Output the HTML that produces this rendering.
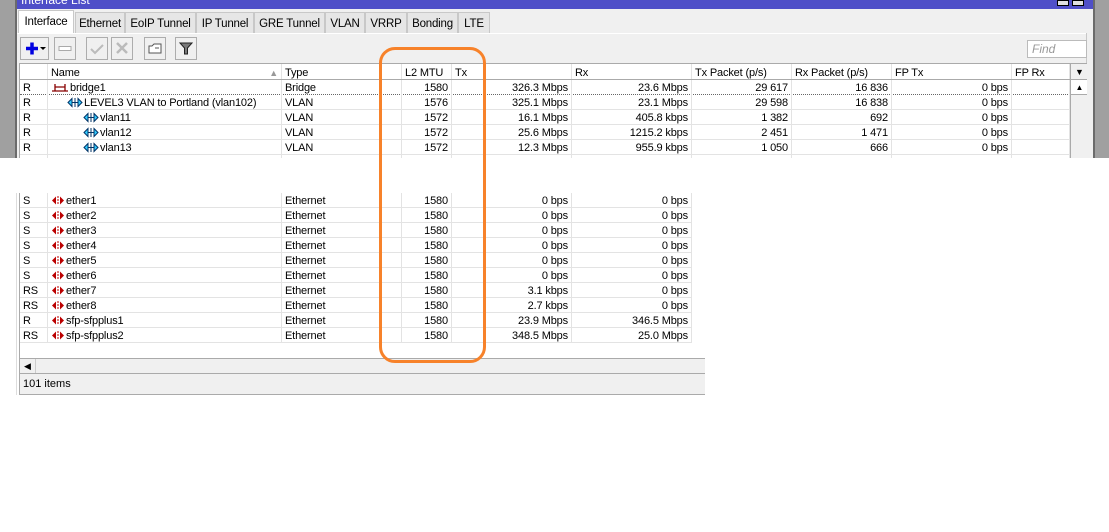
<!DOCTYPE html>
<html><head><meta charset="utf-8"><style>
*{margin:0;padding:0;box-sizing:border-box}
body{width:1109px;height:532px;background:#fff;position:relative;overflow:hidden;font-family:"Liberation Sans",Arial,sans-serif;font-size:11px;color:#000}
.abs{position:absolute}
.row{position:absolute;left:0;height:15px;display:flex;border-bottom:1px solid #e3e3e3;white-space:nowrap;letter-spacing:-0.15px}
.row>div{height:15px;line-height:16px;border-right:1px solid #e3e3e3;padding:0 3px;overflow:hidden}
.w0{width:28px}.w1{width:234px}.w2{width:120px}.w3{width:50px;text-align:right}.w4{width:120px;text-align:right}.w5{width:120px;text-align:right}.w6{width:100px;text-align:right}.w7{width:100px;text-align:right}.w8{width:120px;text-align:right}.w9{width:58px}
.hdr>div{background:#fff;line-height:18px;text-align:left}
.tab{position:absolute;top:12px;height:22px;background:#e6e6e6;border:1px solid #c8c8c8;border-bottom:none;line-height:22px;text-align:center;font-size:11.5px;letter-spacing:-0.2px}
.btn{position:absolute;top:37px;height:23px;border:1px solid #adadad;background:#f0f0f0}
.ic{display:inline-block;vertical-align:-2px;margin-right:1px}
</style></head><body>
<div class="abs" style="left:0;top:0;width:15px;height:158px;background:#a0a0a0"></div>
<div class="abs" style="left:15px;top:0;width:2px;height:158px;background:#6b6b6b"></div>
<div class="abs" style="left:1093px;top:0;width:2px;height:158px;background:#6b6b6b"></div>
<div class="abs" style="left:1095px;top:0;width:14px;height:158px;background:#a0a0a0"></div>
<div class="abs" style="left:17px;top:0;width:1076px;height:158px;background:#f0f0f0"></div>
<div class="abs" style="left:17px;top:0;width:1076px;height:9px;background:#4f4fc8;overflow:hidden"><span style="position:absolute;left:4px;top:-7px;color:#fff;font-size:12px">Interface List</span>
<div class="abs" style="left:1040px;top:0;width:12px;height:6px;border:1px solid #000;background:#e0e0e0"></div><div class="abs" style="left:1055px;top:0;width:12px;height:6px;border:1px solid #000;background:#e0e0e0"></div></div>
<div class="tab" style="left:18px;width:56px;top:10px;height:24px;background:#fff;line-height:22px">Interface</div>
<div class="tab" style="left:75px;width:50px">Ethernet</div>
<div class="tab" style="left:125px;width:71px">EoIP Tunnel</div>
<div class="tab" style="left:196px;width:58px">IP Tunnel</div>
<div class="tab" style="left:254px;width:71px">GRE Tunnel</div>
<div class="tab" style="left:325px;width:40px">VLAN</div>
<div class="tab" style="left:365px;width:42px">VRRP</div>
<div class="tab" style="left:407px;width:51px">Bonding</div>
<div class="tab" style="left:458px;width:32px">LTE</div>
<div class="abs" style="left:17px;top:33px;width:1070px;height:1px;background:#fff"></div>
<div class="abs" style="left:1086px;top:33px;width:1px;height:125px;background:#c8c8c8"></div>
<div class="btn" style="left:20px;width:29px"><svg width="27" height="21"><path d="M5 10.5h12M11 4.5v12" stroke="#0000e0" stroke-width="3.5"/><path d="M19 9h6l-3 3z" fill="#000"/></svg></div>
<div class="btn" style="left:54px;width:22px"><svg width="20" height="21"><rect x="4" y="8.5" width="12" height="4" fill="#fff" stroke="#aaa"/></svg></div>
<div class="btn" style="left:86px;width:22px"><svg width="20" height="21"><path d="M4 11l4 4 8-8" stroke="#bbb" stroke-width="2" fill="none"/></svg></div>
<div class="btn" style="left:111px;width:22px"><svg width="20" height="21"><path d="M5 5l10 10M15 5L5 15" stroke="#bbb" stroke-width="2.5"/></svg></div>
<div class="btn" style="left:144px;width:22px"><svg width="20" height="21"><path d="M4 8h3l2-2h7v9H4z" fill="#fff" stroke="#555"/><path d="M10 10h4" stroke="#555"/></svg></div>
<div class="btn" style="left:175px;width:22px"><svg width="20" height="21"><path d="M4 5h12l-4.5 5v6h-3v-6z" fill="#7a7a7a" stroke="#222"/></svg></div>
<div class="abs" style="left:1027px;top:40px;width:60px;height:18px;background:#fff;border:1px solid #bbb;color:#999;font-style:italic;font-size:12px;line-height:16px;padding-left:4px">Find</div>
<div class="abs" style="left:19px;top:63px;width:1068px;height:95px;overflow:hidden;background:#fff;border-top:1px solid #aaa;border-left:1px solid #aaa">
 <div class="row hdr" style="top:0;height:16px;border-bottom:1px solid #aaa"><div class="w0"></div><div class="w1">Name<span style="float:right;color:#999;font-size:9px">▲</span></div><div class="w2">Type</div><div class="w3" style="text-align:left">L2 MTU</div><div class="w4">Tx</div><div class="w5">Rx</div><div class="w6">Tx Packet (p/s)</div><div class="w7">Rx Packet (p/s)</div><div class="w8">FP Tx</div><div class="w9">FP Rx</div></div>
 <div class="row" style="top:16px;border-bottom:1px dotted #666"><div class="w0">R</div><div class="w1"><svg class="ic" width="18" height="11"><path d="M1 9h16M4 2v7M14 2v7M4 5h10" stroke="#800" stroke-width="1.3" fill="none"/></svg>bridge1</div><div class="w2">Bridge</div><div class="w3">1580</div><div class="w4">326.3 Mbps</div><div class="w5">23.6 Mbps</div><div class="w6">29 617</div><div class="w7">16 836</div><div class="w8">0 bps</div><div class="w9"></div></div>
 <div class="row" style="top:31px"><div class="w0">R</div><div class="w1" style="padding-left:19px"><svg class="ic" width="16" height="11"><path d="M1 5.5l4-4v8zM15 5.5l-4-4v8zM5 5.5h6M8 1v9" stroke="#036" fill="#3cf"/></svg>LEVEL3 VLAN to Portland (vlan102)</div><div class="w2">VLAN</div><div class="w3">1576</div><div class="w4">325.1 Mbps</div><div class="w5">23.1 Mbps</div><div class="w6">29 598</div><div class="w7">16 838</div><div class="w8">0 bps</div><div class="w9"></div></div>
 <div class="row" style="top:46px"><div class="w0">R</div><div class="w1" style="padding-left:35px"><svg class="ic" width="16" height="11"><path d="M1 5.5l4-4v8zM15 5.5l-4-4v8zM5 5.5h6M8 1v9" stroke="#036" fill="#3cf"/></svg>vlan11</div><div class="w2">VLAN</div><div class="w3">1572</div><div class="w4">16.1 Mbps</div><div class="w5">405.8 kbps</div><div class="w6">1 382</div><div class="w7">692</div><div class="w8">0 bps</div><div class="w9"></div></div>
 <div class="row" style="top:61px"><div class="w0">R</div><div class="w1" style="padding-left:35px"><svg class="ic" width="16" height="11"><path d="M1 5.5l4-4v8zM15 5.5l-4-4v8zM5 5.5h6M8 1v9" stroke="#036" fill="#3cf"/></svg>vlan12</div><div class="w2">VLAN</div><div class="w3">1572</div><div class="w4">25.6 Mbps</div><div class="w5">1215.2 kbps</div><div class="w6">2 451</div><div class="w7">1 471</div><div class="w8">0 bps</div><div class="w9"></div></div>
 <div class="row" style="top:76px"><div class="w0">R</div><div class="w1" style="padding-left:35px"><svg class="ic" width="16" height="11"><path d="M1 5.5l4-4v8zM15 5.5l-4-4v8zM5 5.5h6M8 1v9" stroke="#036" fill="#3cf"/></svg>vlan13</div><div class="w2">VLAN</div><div class="w3">1572</div><div class="w4">12.3 Mbps</div><div class="w5">955.9 kbps</div><div class="w6">1 050</div><div class="w7">666</div><div class="w8">0 bps</div><div class="w9"></div></div>
 <div class="row" style="top:91px"><div class="w0">R</div><div class="w1" style="padding-left:35px">vlan14</div><div class="w2">VLAN</div><div class="w3">1572</div><div class="w4">27.1 Mbps</div><div class="w5">3.1 Mbps</div><div class="w6">2 300</div><div class="w7">1 500</div><div class="w8">0 bps</div><div class="w9"></div></div>
 <div class="abs" style="left:1050px;top:0;width:18px;height:95px;background:#f0f0f0;border-left:1px solid #aaa"><div style="height:16px;border-bottom:1px solid #aaa;text-align:center;font-size:9px;line-height:16px">▼</div><div style="height:15px;border-bottom:1px solid #aaa;background:#fff;text-align:center;font-size:8px;line-height:15px">▲</div></div>
</div>
<div class="abs" style="left:16px;top:193px;width:1px;height:202px;background:#ddd"></div>
<div class="abs" style="left:19px;top:193px;width:686px;height:202px;overflow:hidden;background:#fff;border-left:1px solid #aaa">
 <div class="row" style="top:0"><div class="w0">S</div><div class="w1"><svg class="ic" width="14" height="11"><path d="M1 5.5l4-4v8zM13 5.5l-4-4v8z" fill="#b00"/><path d="M7 1v9" stroke="#b00" stroke-dasharray="2 1"/></svg>ether1</div><div class="w2">Ethernet</div><div class="w3">1580</div><div class="w4">0 bps</div><div class="w5">0 bps</div></div>
 <div class="row" style="top:15px"><div class="w0">S</div><div class="w1"><svg class="ic" width="14" height="11"><path d="M1 5.5l4-4v8zM13 5.5l-4-4v8z" fill="#b00"/><path d="M7 1v9" stroke="#b00" stroke-dasharray="2 1"/></svg>ether2</div><div class="w2">Ethernet</div><div class="w3">1580</div><div class="w4">0 bps</div><div class="w5">0 bps</div></div>
 <div class="row" style="top:30px"><div class="w0">S</div><div class="w1"><svg class="ic" width="14" height="11"><path d="M1 5.5l4-4v8zM13 5.5l-4-4v8z" fill="#b00"/><path d="M7 1v9" stroke="#b00" stroke-dasharray="2 1"/></svg>ether3</div><div class="w2">Ethernet</div><div class="w3">1580</div><div class="w4">0 bps</div><div class="w5">0 bps</div></div>
 <div class="row" style="top:45px"><div class="w0">S</div><div class="w1"><svg class="ic" width="14" height="11"><path d="M1 5.5l4-4v8zM13 5.5l-4-4v8z" fill="#b00"/><path d="M7 1v9" stroke="#b00" stroke-dasharray="2 1"/></svg>ether4</div><div class="w2">Ethernet</div><div class="w3">1580</div><div class="w4">0 bps</div><div class="w5">0 bps</div></div>
 <div class="row" style="top:60px"><div class="w0">S</div><div class="w1"><svg class="ic" width="14" height="11"><path d="M1 5.5l4-4v8zM13 5.5l-4-4v8z" fill="#b00"/><path d="M7 1v9" stroke="#b00" stroke-dasharray="2 1"/></svg>ether5</div><div class="w2">Ethernet</div><div class="w3">1580</div><div class="w4">0 bps</div><div class="w5">0 bps</div></div>
 <div class="row" style="top:75px"><div class="w0">S</div><div class="w1"><svg class="ic" width="14" height="11"><path d="M1 5.5l4-4v8zM13 5.5l-4-4v8z" fill="#b00"/><path d="M7 1v9" stroke="#b00" stroke-dasharray="2 1"/></svg>ether6</div><div class="w2">Ethernet</div><div class="w3">1580</div><div class="w4">0 bps</div><div class="w5">0 bps</div></div>
 <div class="row" style="top:90px"><div class="w0">RS</div><div class="w1"><svg class="ic" width="14" height="11"><path d="M1 5.5l4-4v8zM13 5.5l-4-4v8z" fill="#b00"/><path d="M7 1v9" stroke="#b00" stroke-dasharray="2 1"/></svg>ether7</div><div class="w2">Ethernet</div><div class="w3">1580</div><div class="w4">3.1 kbps</div><div class="w5">0 bps</div></div>
 <div class="row" style="top:105px"><div class="w0">RS</div><div class="w1"><svg class="ic" width="14" height="11"><path d="M1 5.5l4-4v8zM13 5.5l-4-4v8z" fill="#b00"/><path d="M7 1v9" stroke="#b00" stroke-dasharray="2 1"/></svg>ether8</div><div class="w2">Ethernet</div><div class="w3">1580</div><div class="w4">2.7 kbps</div><div class="w5">0 bps</div></div>
 <div class="row" style="top:120px"><div class="w0">R</div><div class="w1"><svg class="ic" width="14" height="11"><path d="M1 5.5l4-4v8zM13 5.5l-4-4v8z" fill="#b00"/><path d="M7 1v9" stroke="#b00" stroke-dasharray="2 1"/></svg>sfp-sfpplus1</div><div class="w2">Ethernet</div><div class="w3">1580</div><div class="w4">23.9 Mbps</div><div class="w5">346.5 Mbps</div></div>
 <div class="row" style="top:135px"><div class="w0">RS</div><div class="w1"><svg class="ic" width="14" height="11"><path d="M1 5.5l4-4v8zM13 5.5l-4-4v8z" fill="#b00"/><path d="M7 1v9" stroke="#b00" stroke-dasharray="2 1"/></svg>sfp-sfpplus2</div><div class="w2">Ethernet</div><div class="w3">1580</div><div class="w4">348.5 Mbps</div><div class="w5">25.0 Mbps</div></div>
 <div class="abs" style="left:0;top:165px;width:686px;height:16px;background:#f0f0f0;border-top:1px solid #aaa;border-bottom:1px solid #aaa"><div style="width:16px;height:14px;border-right:1px solid #ccc;font-size:9px;text-align:center;line-height:14px">◀</div></div>
 <div class="abs" style="left:0;top:181px;width:686px;height:21px;background:#f0f0f0;border-bottom:1px solid #aaa;padding-left:3px;line-height:20px">101 items</div>
</div>
<div class="abs" style="left:379px;top:47px;width:107px;height:316px;border:3px solid #f7822a;border-radius:16px"></div>
</body></html>
